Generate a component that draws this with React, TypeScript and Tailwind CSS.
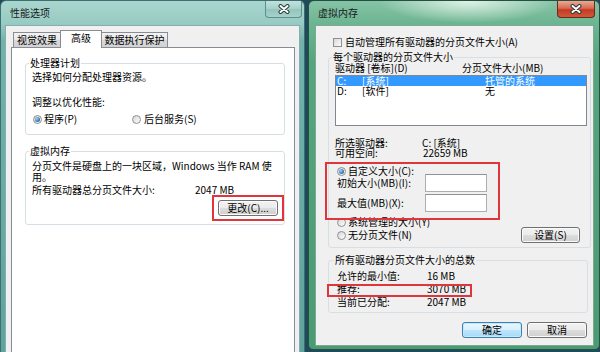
import React from "react";

const FONT = "font-['Noto_Sans_CJK_SC',sans-serif]";

function CloseGlyph() {
  return (
    <svg width="12" height="10" viewBox="0 0 12 10">
      <path d="M2.5 2 L9.5 8 M9.5 2 L2.5 8" stroke="#2a3a3a" strokeWidth="4" strokeLinecap="round" />
      <path d="M2.5 2 L9.5 8 M9.5 2 L2.5 8" stroke="#ffffff" strokeWidth="2" strokeLinecap="round" />
    </svg>
  );
}

function Radio({ checked }: { checked?: boolean }) {
  return (
    <span className="flex h-[9px] w-[9px] shrink-0 items-center justify-center rounded-full border border-[#8e8f8f] bg-[linear-gradient(135deg,#d4d4d4,#ffffff)]">
      {checked && (
        <span className="h-[5px] w-[5px] rounded-full bg-[radial-gradient(circle_at_35%_35%,#9fd6fa,#1f62b0_75%)]" />
      )}
    </span>
  );
}

function Btn({
  children,
  className,
  primary,
}: {
  children: React.ReactNode;
  className?: string;
  primary?: boolean;
}) {
  const base =
    "flex h-[16px] shrink-0 items-center justify-center rounded-[3px] border text-[10px] leading-[12px] text-black";
  const skin = primary
    ? "border-[#3c7fb1] bg-[linear-gradient(#eaf6fd,#d9f0fc_50%,#bee6fd_50%,#a7d9f5)] shadow-[inset_0_0_0_1px_#c7e8fb]"
    : "border-[#707070] bg-[linear-gradient(#f2f2f2,#ebebeb_50%,#dddddd_50%,#cfcfcf)] shadow-[inset_0_0_0_1px_#fbfbfb]";
  return <div className={`${base} ${skin} ${className ?? ""}`}>{children}</div>;
}

function LeftWindow() {
  return (
    <div className="relative flex h-[372px] w-[305px] shrink-0 flex-col rounded-t-[6px] border border-[#3d6e70] bg-[linear-gradient(180deg,#a9d6cf_0px,#98cbc3_22px,#72b2ac_40px,#5fa19d)] px-[4px]">
      <div className="flex h-[24px] items-center pl-[5px] text-[10px] leading-[12px] text-[#1a1a1a]">
        性能选项
      </div>
      <div className="absolute right-[2px] top-0 flex h-[17px] w-[37px] items-center justify-center rounded-b-[4px] border border-t-0 border-[#5f8f8b] bg-[linear-gradient(#c2e2dc,#a6d0c9_50%,#93c4bc_50%,#a5d2ca)]">
        <CloseGlyph />
      </div>
      <div className="flex flex-1 flex-col border border-[#86aeaa] bg-[#f0f0f0] pl-[5px] pr-[4px] pt-[4px]">
        <div className="flex h-[17px] items-end pl-[2px]">
          <div className="flex h-[15px] w-[48px] items-center justify-center border border-b-0 border-[#898c95] bg-[linear-gradient(#f3f3f3,#e8e8e8_50%,#dadada_50%,#d2d2d2)] leading-[12px]">
            视觉效果
          </div>
          <div className="relative z-10 -mb-px -ml-px flex h-[18px] w-[42px] items-start justify-center border border-b-0 border-[#898c95] bg-white pt-[1px] leading-[12px]">
            高级
          </div>
          <div className="-ml-px flex h-[15px] w-[67px] items-center justify-center border border-b-0 border-[#898c95] bg-[linear-gradient(#f3f3f3,#e8e8e8_50%,#dadada_50%,#d2d2d2)] leading-[12px]">
            数据执行保护
          </div>
        </div>
        <div className="flex flex-1 flex-col border border-[#898c95] bg-white pl-[13px] pr-[9px] pt-[9px]">
          <fieldset className="rounded-[3px] border border-[#d5dfe5] px-[6px] pb-[9px]">
            <legend className="-ml-[3px] px-[1px] leading-[12px]">处理器计划</legend>
            <div className="pt-[2px] leading-[12px]">选择如何分配处理器资源。</div>
            <div className="mt-[13px] leading-[12px]">调整以优化性能:</div>
            <div className="mt-[5px] flex h-[12px] items-center">
              <div className="flex w-[100px] items-center pl-[1px]">
                <Radio checked />
                <span className="ml-[2px] leading-[12px]">程序(P)</span>
              </div>
              <div className="flex items-center">
                <Radio />
                <span className="ml-[3px] leading-[12px]">后台服务(S)</span>
              </div>
            </div>
          </fieldset>
          <fieldset className="mt-[10px] rounded-[3px] border border-[#d5dfe5] px-[6px] pb-[3px]">
            <legend className="-ml-[3px] px-[1px] leading-[12px]">虚拟内存</legend>
            <div className="whitespace-nowrap pt-[3px] leading-[11px]">
              分页文件是硬盘上的一块区域，Windows 当作 RAM 使
            </div>
            <div className="leading-[11px]">用。</div>
            <div className="mt-[2px] flex leading-[11px]">
              <span className="w-[163px]">所有驱动器总分页文件大小:</span>
              <span>2047 MB</span>
            </div>
            <div className="flex justify-end">
              <div className="-mr-[6px] border-2 border-[#e0353b] px-[4px] py-[3px]">
                <Btn className="w-[60px]">更改(C)...</Btn>
              </div>
            </div>
          </fieldset>
        </div>
      </div>
    </div>
  );
}

function RightWindow() {
  return (
    <div className="relative ml-[3px] flex h-[350px] w-[292px] shrink-0 flex-col rounded-t-[6px] rounded-b-[5px] border border-[#23503f] bg-[radial-gradient(ellipse_90px_22px_at_55%_0%,#dff2e6,transparent),linear-gradient(180deg,#86c3a6_0px,#6db592_22px,#55a67f_60px,#4a9b73)] pb-[3px] pl-[6px] pr-[5px]">
      <div className="flex h-[24px] items-center pl-[3px] text-[10px] leading-[12px] text-[#1a1a1a]">
        虚拟内存
      </div>
      <div className="absolute right-[4px] top-0 flex h-[17px] w-[38px] items-center justify-center rounded-b-[4px] border border-t-0 border-[#6b2a1c] bg-[linear-gradient(#eba896,#d86c51_45%,#c23b22_55%,#d2583a)]">
        <CloseGlyph />
      </div>
      <div className="relative flex flex-1 flex-col border border-[#7ea892] bg-[#f0f0f0]">
        <div className="mt-[10px] flex h-[12px] items-center pl-[17px]">
          <span className="h-[9px] w-[9px] shrink-0 border border-[#8f8f8f] bg-[linear-gradient(135deg,#d8d8d8,#fbfbfb)]" />
          <span className="ml-[3px] leading-[12px]">自动管理所有驱动器的分页文件大小(A)</span>
        </div>

        <fieldset className="ml-[12px] mr-[2px] mt-[4px] rounded-[3px] border border-[#d5dfe5] pb-[4px] pl-[6px] pr-[3px]">
          <legend className="-ml-[3px] px-[1px] leading-[10px]">每个驱动器的分页文件大小</legend>
          <div className="flex leading-[11px]">
            <span className="w-[127px]">驱动器 [卷标](D)</span>
            <span>分页文件大小(MB)</span>
          </div>
          <div className="mt-[2px] h-[51px] border border-[#828790] bg-white">
            <div className="flex h-[10px] items-center bg-[#3399ff] leading-[10px] text-white">
              <span className="w-[26px] pl-[1px]">C:</span>
              <span className="w-[123px]">[系统]</span>
              <span>托管的系统</span>
            </div>
            <div className="flex h-[10px] items-center leading-[10px]">
              <span className="w-[26px] pl-[1px]">D:</span>
              <span className="w-[123px]">[软件]</span>
              <span>无</span>
            </div>
          </div>
          <div className="mt-[12px] flex leading-[10px]">
            <span className="w-[87px]">所选驱动器:</span>
            <span>C: [系统]</span>
          </div>
          <div className="flex leading-[10px]">
            <span className="w-[88px]">可用空间:</span>
            <span>22659 MB</span>
          </div>
          <div className="mt-[7px] flex h-[12px] items-center pl-[2px]">
            <Radio checked />
            <span className="ml-[2px] leading-[12px]">自定义大小(C):</span>
          </div>
          <div className="-mt-[3px] flex h-[18px] items-center pl-[2px]">
            <span className="w-[88px] leading-[12px]">初始大小(MB)(I):</span>
            <div className="h-[18px] w-[62px] border border-[#abadb3] border-t-[#8f9399] bg-white" />
          </div>
          <div className="mt-[2px] flex h-[18px] items-center pl-[2px]">
            <span className="w-[88px] leading-[12px]">最大值(MB)(X):</span>
            <div className="h-[18px] w-[62px] border border-[#abadb3] border-t-[#8f9399] bg-white" />
          </div>
          <div className="mt-[4px] flex h-[12px] items-center pl-[2px]">
            <Radio />
            <span className="ml-[2px] leading-[12px]">系统管理的大小(Y)</span>
          </div>
          <div className="-mt-[1px] flex h-[16px] items-center justify-between pl-[2px] pr-[7px]">
            <div className="flex items-center">
              <Radio />
              <span className="ml-[2px] leading-[12px]">无分页文件(N)</span>
            </div>
            <Btn className="w-[59px]">设置(S)</Btn>
          </div>
        </fieldset>

        <fieldset className="ml-[12px] mr-[5px] mt-[7px] rounded-[3px] border border-[#d5dfe5] pb-[4px] pl-[6px] pr-[3px]">
          <legend className="-ml-[1px] px-[1px] leading-[10px]">所有驱动器分页文件大小的总数</legend>
          <div className="flex pl-[2px] pt-[4px] leading-[13px]">
            <span className="w-[90px]">允许的最小值:</span>
            <span>16 MB</span>
          </div>
          <div className="flex pl-[2px] leading-[13px]">
            <span className="w-[90px]">推荐:</span>
            <span>3070 MB</span>
          </div>
          <div className="flex pl-[2px] leading-[13px]">
            <span className="w-[90px]">当前已分配:</span>
            <span>2047 MB</span>
          </div>
        </fieldset>

        <div className="mt-[9px] flex justify-end gap-[5px] pr-[6px]">
          <Btn primary className="w-[60px]">确定</Btn>
          <Btn className="w-[60px]">取消</Btn>
        </div>

        <div className="pointer-events-none absolute left-[9px] top-[136px] h-[58px] w-[175px] border-2 border-[#e0353b]" />
        <div className="pointer-events-none absolute left-[11px] top-[258px] h-[13px] w-[145px] border-2 border-[#e0353b]" />
      </div>
    </div>
  );
}

export default function App() {
  return (
    <div className={`flex h-[352px] w-[600px] items-start overflow-hidden bg-[#1e4a5c] text-[10px] text-black ${FONT}`}>
      <LeftWindow />
      <RightWindow />
    </div>
  );
}
